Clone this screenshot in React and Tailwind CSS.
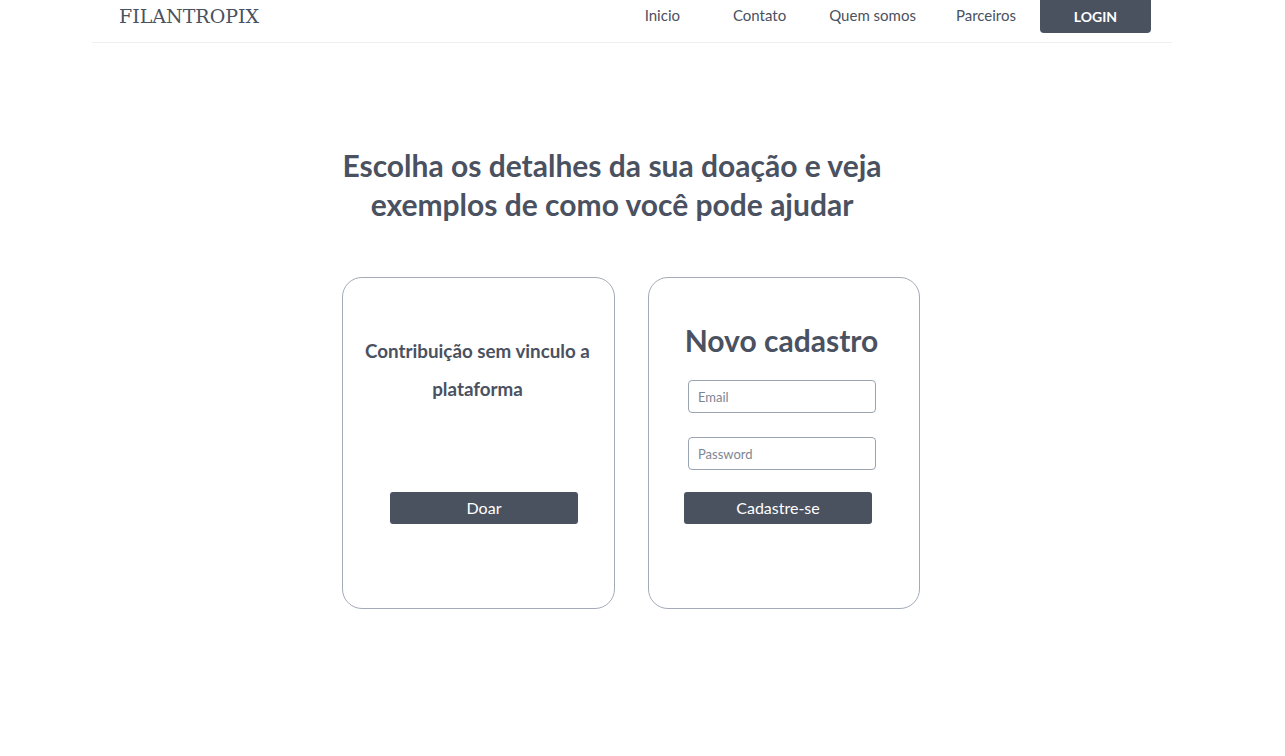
import React from "react";

const Header = () => (
  <header className="ml-[92px] w-[1080px] h-[43px] border-b border-[#efefef] flex items-start justify-between">
    <h1
      className="pl-[27px] pt-[3px] text-[19px] leading-[26px] text-[#4a5160]"
      style={{ fontFamily: '"DejaVu Serif", "Liberation Serif", serif' }}
    >
      FILANTROPIX
    </h1>
    <nav className="flex items-start h-full mr-[21px]">
      <a className="pt-[5px] text-[15px] leading-[20px] text-[#4a5160] mr-[53px]">Inicio</a>
      <a className="pt-[5px] text-[15px] leading-[20px] text-[#4a5160] mr-[43px]">Contato</a>
      <a className="pt-[5px] text-[15px] leading-[20px] text-[#4a5160] mr-[40px]">Quem somos</a>
      <a className="pt-[5px] text-[15px] leading-[20px] text-[#4a5160] mr-[24px]">Parceiros</a>
      <button className="w-[111px] h-[33px] rounded-b-[4px] bg-[#4a5260] text-white text-[14px] font-bold">
        LOGIN
      </button>
    </nav>
  </header>
);

const Input = ({ placeholder, type }) => (
  <input
    type={type}
    placeholder={placeholder}
    className="ml-[39px] w-[188px] h-[33px] rounded-[4px] border border-[#9aa3b0] px-[9px] text-[13px] placeholder:text-[#7d8594] text-[#4a5160] outline-none"
  />
);

export default function App() {
  return (
    <div className="min-h-screen bg-white" style={{ fontFamily: 'Lato, "Open Sans", sans-serif' }}>
      <Header />

      <main className="w-[1262px] flex flex-col items-center">
        <h2 className="mt-[103px] pr-[38px] text-center text-[30px] leading-[39px] font-bold text-[#4a5160]">
          Escolha os detalhes da sua doação e veja
          <br />
          exemplos de como você pode ajudar
        </h2>

        <div className="mt-[53px] flex gap-[33px]">
          {/* Contribuicao */}
          <div className="w-[273px] h-[332px] rounded-[20px] border border-[#a3abb8] flex flex-col items-start">
            <p className="w-full pt-[54px] pr-[2px] text-center text-[18.8px] leading-[38px] font-bold text-[#4a5160]">
              Contribuição sem vinculo a
              <br />
              plataforma
            </p>
            <button className="ml-[47px] mt-[84px] w-[188px] h-[32px] rounded-[3px] bg-[#4a5260] text-white text-[16px]">
              Doar
            </button>
          </div>

          {/* Novo cadastro */}
          <div className="w-[272px] h-[332px] rounded-[20px] border border-[#a3abb8] flex flex-col items-start">
            <h3 className="w-full pt-[42px] pr-[5px] text-center text-[30px] leading-[40px] font-bold text-[#4a5160]">
              Novo cadastro
            </h3>
            <div className="mt-[20px] flex flex-col gap-[24px]">
              <Input placeholder="Email" type="email" />
              <Input placeholder="Password" type="password" />
            </div>
            <button className="ml-[35px] mt-[22px] w-[188px] h-[32px] rounded-[3px] bg-[#4a5260] text-white text-[16px]">
              Cadastre-se
            </button>
          </div>
        </div>
      </main>
    </div>
  );
}
